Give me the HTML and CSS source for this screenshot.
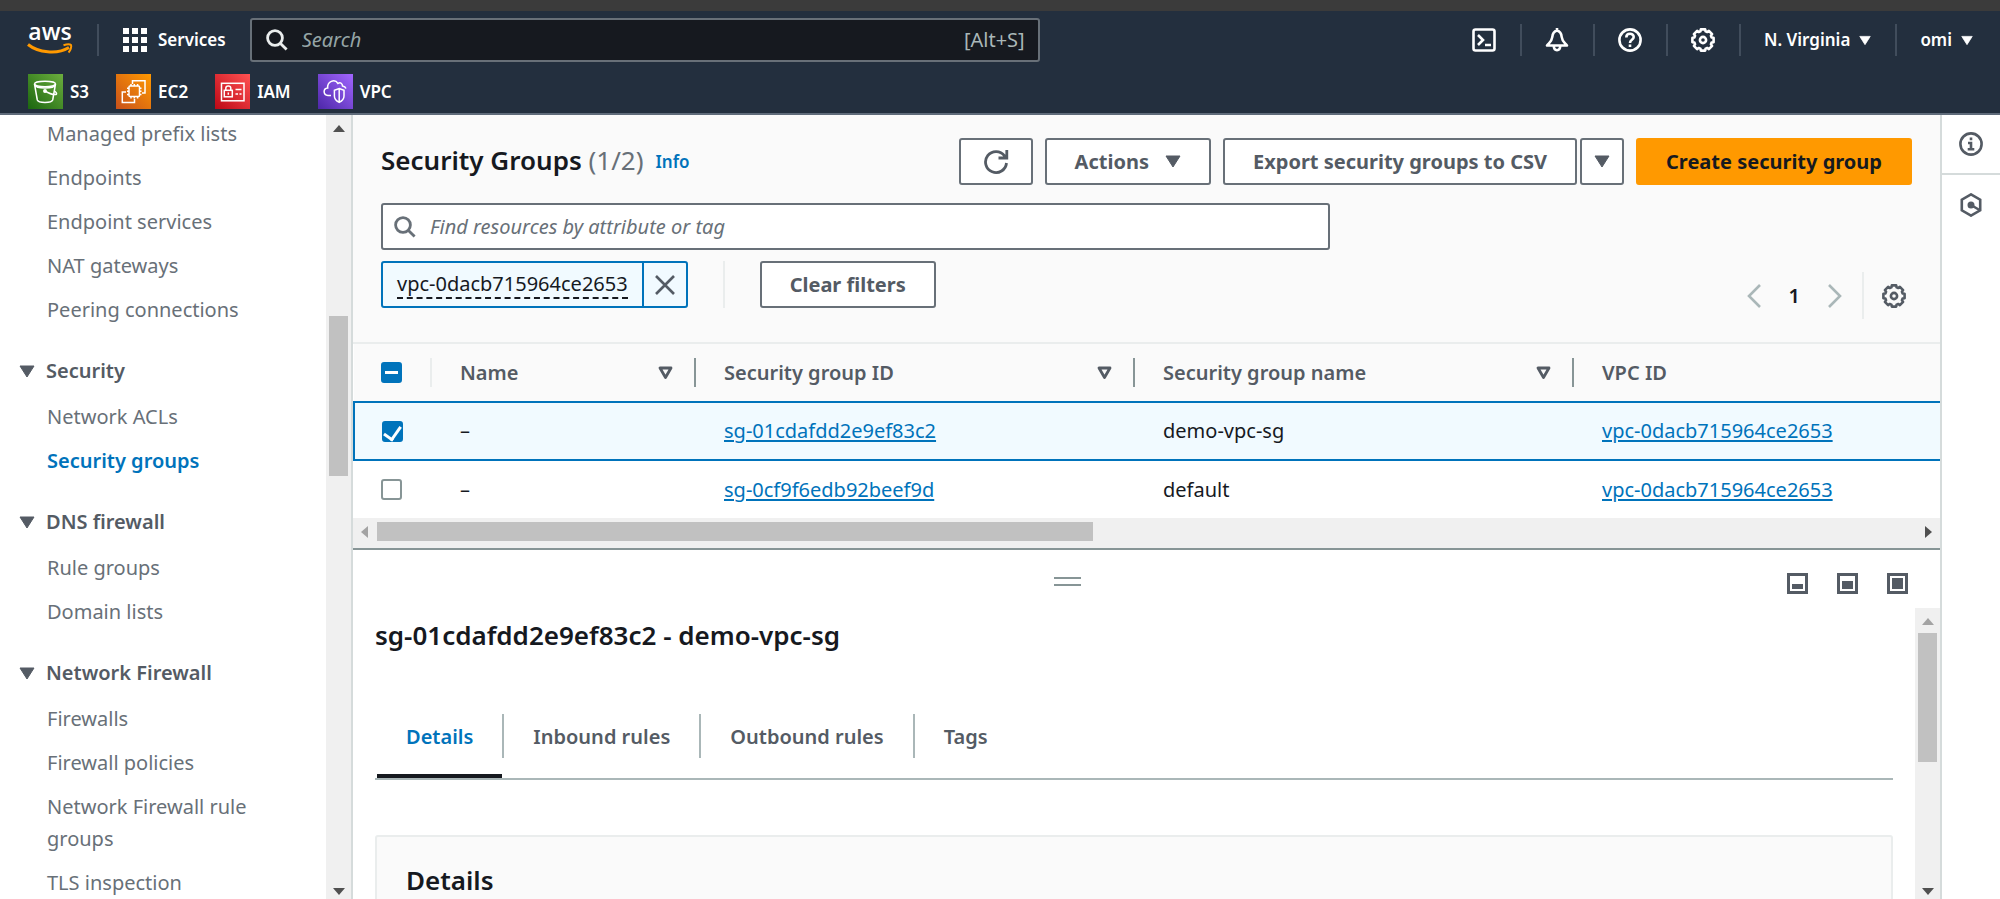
FILE: index.html
```html
<!DOCTYPE html>
<html lang="en">
<head>
<meta charset="utf-8">
<title>Security Groups | VPC Console</title>
<link rel="stylesheet" href="styles.css">
</head>
<body>
<svg class="defs" aria-hidden="true">
  <defs>
    <linearGradient id="g-s3" x1="0" y1="1" x2="1" y2="0"><stop offset="0" stop-color="#1b660f"/><stop offset="1" stop-color="#6cae3e"/></linearGradient>
    <linearGradient id="g-ec2" x1="0" y1="1" x2="1" y2="0"><stop offset="0" stop-color="#c8511b"/><stop offset="1" stop-color="#ff9900"/></linearGradient>
    <linearGradient id="g-iam" x1="0" y1="1" x2="1" y2="0"><stop offset="0" stop-color="#bd0816"/><stop offset="1" stop-color="#ff5252"/></linearGradient>
    <linearGradient id="g-vpc" x1="0" y1="1" x2="1" y2="0"><stop offset="0" stop-color="#4d27a8"/><stop offset="1" stop-color="#a166ff"/></linearGradient>
  </defs>
  <symbol id="gear" viewBox="0 0 24 24">
    <path d="M20.6 9.4 22.6 9.8V14.2L20.6 14.6 19.95 16.2 21.1 17.9 17.9 21.1 16.2 19.95 14.6 20.6 14.2 22.6H9.8L9.4 20.6 7.8 19.95 6.1 21.1 2.9 17.9 4.05 16.2 3.4 14.6 1.4 14.2V9.8L3.4 9.4 4.05 7.8 2.9 6.1 6.1 2.9 7.8 4.05 9.4 3.4 9.8 1.4H14.2L14.6 3.4 16.2 4.05 17.9 2.9 21.1 6.1 19.95 7.8Z" fill="none" stroke="currentColor" stroke-width="2.6" stroke-linejoin="round"/>
    <circle cx="12" cy="12" r="3.1" fill="none" stroke="currentColor" stroke-width="2.6"/>
  </symbol>
  <symbol id="lens" viewBox="0 0 22 22">
    <circle cx="9" cy="9" r="7.4" fill="none" stroke="currentColor" stroke-width="2.8"/>
    <path d="M14.2 14.2 20.6 20.6" stroke="currentColor" stroke-width="2.8"/>
  </symbol>
  <symbol id="caret" viewBox="0 0 16 13"><path d="M1 1H15L8 12Z" fill="currentColor" stroke="currentColor" stroke-linejoin="round"/></symbol>
  <symbol id="sort" viewBox="0 0 15 14"><path d="M2 2H13L7.500 11.500Z" fill="none" stroke="currentColor" stroke-width="2.8" stroke-linejoin="round"/></symbol>
  <symbol id="tri-up" viewBox="0 0 12 7"><path d="M0 7H12L6 0Z" fill="currentColor"/></symbol>
</svg>

<div class="chrome-edge"></div>
<header class="top">
  <div class="top-row">
    <a class="logo" href="#" aria-label="AWS home">
      <svg width="46" height="44" viewBox="0 0 46 44">
        <text x="23" y="22" text-anchor="middle" class="logo-text">aws</text>
        <path d="M1 26.500C11 34.500 30 37 42 29.500" fill="none" stroke="#f90" stroke-width="3"/>
        <path d="M36.500 27.200C40 26 43 26 44 27 44.800 28.500 43.500 32.500 41.500 34.500" fill="none" stroke="#f90" stroke-width="2"/>
      </svg>
    </a>
    <span class="bar"></span>
    <button class="services" type="button">
      <svg width="24" height="24" viewBox="0 0 24 24" fill="#fff"><path d="M0 0h6v6H0zM9 0h6v6H9zM18 0h6v6h-6zM0 9h6v6H0zM9 9h6v6H9zM18 9h6v6h-6zM0 18h6v6H0zM9 18h6v6H9zM18 18h6v6h-6z"/></svg>
      Services
    </button>
    <label class="top-search">
      <svg width="22" height="22" aria-hidden="true"><use href="#lens"/></svg>
      <input type="search" placeholder="Search" aria-label="Search">
      <span>[Alt+S]</span>
    </label>
    <nav class="tools" aria-label="Account">
      <button type="button" aria-label="CloudShell">
        <svg width="24" height="24" viewBox="0 0 24 24" fill="none" stroke="currentColor" stroke-width="2.6"><rect x="1.500" y="1.500" width="21" height="21" rx="2"/><path d="M6 7l5 5-5 5M13 17h6"/></svg>
      </button>
      <button type="button" aria-label="Notifications">
        <svg width="24" height="24" viewBox="0 0 24 24" fill="none" stroke="currentColor" stroke-width="2.600" stroke-linejoin="round"><path d="M12 2.500C8.500 3.500 7.500 6 7.300 9 7 13 4.500 14.500 2 17.500H22C19.500 14.500 17 13 16.700 9 16.500 6 15.500 3.500 12 2.500ZM12 3V0M8.800 18C8.800 23.500 15.200 23.500 15.200 18"/></svg>
      </button>
      <button type="button" aria-label="Help">
        <svg width="24" height="24" viewBox="0 0 24 24" fill="none" stroke="currentColor" stroke-width="2.600"><circle cx="12" cy="12" r="10.600"/><path d="M8.300 9.500C8.300 4.500 15.700 4.800 15.700 9 15.700 12 12 11.500 12 15M12 16.500V19"/></svg>
      </button>
      <button type="button" aria-label="Settings"><svg width="24" height="24"><use href="#gear"/></svg></button>
      <button type="button">N. Virginia <svg width="12" height="11"><use href="#caret"/></svg></button>
      <button type="button">omi <svg width="12" height="11"><use href="#caret"/></svg></button>
    </nav>
  </div>
  <nav class="favs" aria-label="Favorites">
    <a href="#"><svg width="35" height="35" viewBox="0 0 35 35" fill="none" stroke="#fff" stroke-width="1.500"><rect width="35" height="35" fill="url(#g-s3)" stroke="none"/><ellipse cx="17" cy="10" rx="10.500" ry="2.700"/><path d="M6.500 10 9.300 26C10.500 29.300 23.500 29.300 24.700 26L27.500 10M17 17C21 19.500 25 20.800 28 20.500 29.300 20 28 18 26.500 17M7 11C8 15 26 15 27 11"/><circle cx="17" cy="17" r="1.200" fill="#fff"/></svg>S3</a>
    <a href="#"><svg width="35" height="35" viewBox="0 0 35 35" fill="none" stroke="#fff" stroke-width="1.500"><rect width="35" height="35" fill="url(#g-ec2)" stroke="none"/><path d="M16.500 10V6.700H29V19H26M10 18H6.300V28.500H18.500V25"/><rect x="13" y="12" width="10.500" height="10.500" rx="1"/><path d="M15 12V10M18.300 12V10M21.600 12V10M15 24.500V22.500M18.300 24.500V22.500M21.600 24.500V22.500M13 14.200H11M13 17.300H11M13 20.400H11M25.500 14.200H23.500M25.500 17.300H23.500M25.500 20.400H23.500"/></svg>EC2</a>
    <a href="#"><svg width="35" height="35" viewBox="0 0 35 35" fill="none" stroke="#fff" stroke-width="1.500"><rect width="35" height="35" fill="url(#g-iam)" stroke="none"/><rect x="6.500" y="9.300" width="22.500" height="17.500"/><rect x="9.300" y="16.300" width="8" height="6.500"/><path d="M10.800 16V14.200C10.800 11.300 15.800 11.300 15.800 14.200V16M13.300 18.500V20.800M20.500 15.500H26.500M20.500 20H23M24.500 20H26.500"/></svg>IAM</a>
    <a href="#"><svg width="35" height="35" viewBox="0 0 35 35" fill="none" stroke="#fff" stroke-width="1.500"><rect width="35" height="35" fill="url(#g-vpc)" stroke="none"/><path d="M13 21.500H10C5 21 4.800 14.500 9.700 14 9 8 16.500 4 20 9.500 22.500 7.500 24.500 10 24.500 12 26 12.300 27.500 13.200 28 14.500M21.200 14.500 26 16.200V22C26 25 24 27 21.200 28.300 18.400 27 16.400 25 16.400 22V16.200ZM21.200 14.500V28"/></svg>VPC</a>
  </nav>
</header>

<div class="shell">
  <nav class="side" aria-label="VPC">
    <div class="side-list">
      <ul>
        <li><a href="#">Managed prefix lists</a></li>
        <li><a href="#">Endpoints</a></li>
        <li><a href="#">Endpoint services</a></li>
        <li><a href="#">NAT gateways</a></li>
        <li><a href="#">Peering connections</a></li>
      </ul>
      <h3><svg width="16" height="13"><use href="#caret"/></svg>Security</h3>
      <ul>
        <li><a href="#">Network ACLs</a></li>
        <li><a class="current" href="#" aria-current="page">Security groups</a></li>
      </ul>
      <h3><svg width="16" height="13"><use href="#caret"/></svg>DNS firewall</h3>
      <ul>
        <li><a href="#">Rule groups</a></li>
        <li><a href="#">Domain lists</a></li>
      </ul>
      <h3><svg width="16" height="13"><use href="#caret"/></svg>Network Firewall</h3>
      <ul>
        <li><a href="#">Firewalls</a></li>
        <li><a href="#">Firewall policies</a></li>
        <li><a href="#">Network Firewall rule groups</a></li>
        <li><a href="#">TLS inspection</a></li>
      </ul>
    </div>
    <div class="vbar" aria-hidden="true">
      <svg width="12" height="7"><use href="#tri-up"/></svg>
      <div class="track"><i class="before-side"></i><i class="thumb-side"></i></div>
      <svg class="flip" width="12" height="7"><use href="#tri-up"/></svg>
    </div>
  </nav>

  <main class="main">
    <section class="list">
      <div class="list-head">
        <div class="title-row">
          <h1>Security Groups <span>(1/2)</span></h1>
          <a class="info" href="#">Info</a>
          <div class="actions">
            <button class="btn refresh" type="button" aria-label="Refresh"><svg width="26" height="26" viewBox="0 0 26 26" fill="none" stroke="currentColor" stroke-width="2.800"><path d="M23.500 14A10.500 10.500 0 1 1 21.500 6.800L23 8.500M23.800 1V9H15.500"/></svg></button>
            <button class="btn" type="button">Actions <svg width="16" height="13"><use href="#caret"/></svg></button>
            <div class="split">
              <button class="btn" type="button">Export security groups to CSV</button>
              <button class="btn drop" type="button" aria-label="More export options"><svg width="16" height="13"><use href="#caret"/></svg></button>
            </div>
            <button class="btn primary" type="button">Create security group</button>
          </div>
        </div>
        <label class="find">
          <svg width="22" height="22" aria-hidden="true"><use href="#lens"/></svg>
          <input type="search" placeholder="Find resources by attribute or tag" aria-label="Find resources by attribute or tag">
        </label>
        <div class="filter-row">
          <div class="token"><span><b>vpc-0dacb715964ce2653</b></span><button type="button" aria-label="Remove filter"><svg width="20" height="20" viewBox="0 0 20 20" stroke="currentColor" stroke-width="2.600"><path d="M1 1 19 19M19 1 1 19"/></svg></button></div>
          <span class="rule"></span>
          <button class="btn" type="button">Clear filters</button>
          <div class="pager">
            <button type="button" aria-label="Previous page"><svg width="14" height="24" viewBox="0 0 14 24" fill="none" stroke="currentColor" stroke-width="2.600"><path d="M13 1 2 12 13 23"/></svg></button>
            <button class="page" type="button">1</button>
            <button type="button" aria-label="Next page"><svg width="14" height="24" viewBox="0 0 14 24" fill="none" stroke="currentColor" stroke-width="2.600"><path d="M1 1 12 12 1 23"/></svg></button>
            <span class="rule"></span>
            <button class="prefs" type="button" aria-label="Preferences"><svg width="24" height="24"><use href="#gear"/></svg></button>
          </div>
        </div>
      </div>
      <table>
        <colgroup><col class="c-check"><col class="c-name"><col class="c-wide"><col class="c-wide"><col></colgroup>
        <thead>
          <tr>
            <th><input class="some" type="checkbox" aria-label="Select all" aria-checked="mixed"></th>
            <th><div class="th faint">Name <svg width="15" height="14"><use href="#sort"/></svg></div></th>
            <th><div class="th">Security group ID <svg width="15" height="14"><use href="#sort"/></svg></div></th>
            <th><div class="th">Security group name <svg width="15" height="14"><use href="#sort"/></svg></div></th>
            <th><div class="th">VPC ID</div></th>
          </tr>
        </thead>
        <tbody>
          <tr class="picked">
            <td><input type="checkbox" checked aria-label="Select demo-vpc-sg"></td>
            <td>–</td>
            <td><a href="#">sg-01cdafdd2e9ef83c2</a></td>
            <td>demo-vpc-sg</td>
            <td><a href="#">vpc-0dacb715964ce2653</a></td>
          </tr>
          <tr>
            <td><input type="checkbox" aria-label="Select default"></td>
            <td>–</td>
            <td><a href="#">sg-0cf9f6edb92beef9d</a></td>
            <td>default</td>
            <td><a href="#">vpc-0dacb715964ce2653</a></td>
          </tr>
        </tbody>
      </table>
      <div class="hbar" aria-hidden="true">
        <svg class="dim" width="7" height="12" viewBox="0 0 7 12"><path d="M7 0V12L0 6Z" fill="currentColor"/></svg>
        <div class="track"><i></i></div>
        <svg width="7" height="12" viewBox="0 0 7 12"><path d="M0 0V12L7 6Z" fill="currentColor"/></svg>
      </div>
    </section>

    <section class="panel">
      <div class="panel-bar">
        <span class="grip"></span>
        <div class="sizes">
          <button type="button" aria-label="Small panel"><svg width="21" height="21" viewBox="0 0 21 21"><rect x="1.500" y="1.500" width="18" height="18" fill="none" stroke="currentColor" stroke-width="3"/><rect x="5" y="11" width="11" height="5" fill="currentColor"/></svg></button>
          <button type="button" aria-label="Medium panel"><svg width="21" height="21" viewBox="0 0 21 21"><rect x="1.500" y="1.500" width="18" height="18" fill="none" stroke="currentColor" stroke-width="3"/><rect x="5" y="8" width="11" height="8" fill="currentColor"/></svg></button>
          <button type="button" aria-label="Full panel"><svg width="21" height="21" viewBox="0 0 21 21"><rect x="1.500" y="1.500" width="18" height="18" fill="none" stroke="currentColor" stroke-width="3"/><rect x="5" y="5" width="11" height="11" fill="currentColor"/></svg></button>
        </div>
      </div>
      <div class="panel-body">
        <div class="panel-content">
          <h2>sg-01cdafdd2e9ef83c2 - demo-vpc-sg</h2>
          <div class="tabs" role="tablist">
            <button class="on" type="button" role="tab" aria-selected="true">Details</button>
            <button type="button" role="tab">Inbound rules</button>
            <button type="button" role="tab">Outbound rules</button>
            <button type="button" role="tab">Tags</button>
          </div>
          <div class="card"><h2>Details</h2></div>
        </div>
        <div class="vbar" aria-hidden="true">
          <svg class="dim" width="12" height="7"><use href="#tri-up"/></svg>
          <div class="track"><i class="thumb-panel"></i></div>
          <svg class="flip" width="12" height="7"><use href="#tri-up"/></svg>
        </div>
      </div>
    </section>
  </main>

  <aside class="rail">
    <button type="button" aria-label="Info"><svg width="24" height="24" viewBox="0 0 24 24" fill="none" stroke="currentColor" stroke-width="2.600"><circle cx="12" cy="12" r="10.600"/><path d="M12 5.500V8.200M9 11H12V17.200M8.700 17.200H15.300"/></svg></button>
    <button type="button" aria-label="Diagnostics"><svg width="24" height="24" viewBox="0 0 24 24" fill="none" stroke="currentColor" stroke-width="2.600"><path d="M12 1.400 21.200 6.700V17.300L12 22.600 2.800 17.300V6.700Z"/><circle cx="12" cy="12" r="2.200" fill="currentColor"/><path d="M12 12 20.500 17"/></svg></button>
  </aside>
</div>
</body>
</html>
```
FILE: styles.css
```css
* { box-sizing: border-box; }
body {
  margin: 0;
  height: 100vh;
  display: flex;
  flex-direction: column;
  overflow: hidden;
  background: #fff;
  color: #16191f;
  font: 20px/32px "Noto Sans", "Open Sans", sans-serif;
}
button, input { font: inherit; color: inherit; }
button { border: 0; background: none; padding: 0; display: flex; align-items: center; white-space: nowrap; }
h1, h2, h3, ul { margin: 0; padding: 0; list-style: none; }
a { text-decoration: none; color: inherit; }
svg { display: block; flex: none; }
.defs { position: absolute; width: 0; height: 0; }

.chrome-edge { height: 11px; background: #3b3b3b; flex: none; }
.top { flex: none; background: #232f3e; border-bottom: 2px solid #5f6b7a; color: #fff; font-size: 17px; font-weight: 600; }
.top-row { display: flex; align-items: center; padding: 7px 27px 0; }
.logo svg { overflow: visible; }
.logo-text { font: 600 23px/24px "Open Sans", sans-serif; fill: #fff; }
.bar { width: 2px; height: 32px; background: #414d5c; margin-left: 24px; }
.services { gap: 11px; margin-left: 24px; }
.top-search {
  display: flex; align-items: center; flex: 0 0 790px; height: 44px; margin-left: 24px; padding: 0 13px 0 14px;
  background: #16191f; border: 2px solid #687078; border-radius: 3px; color: #eaeded;
}
.top-search input { flex: 1; min-width: 0; margin-left: 14px; border: 0; padding: 0; background: none; outline: none; font-size: 20px; font-weight: 400; }
.top-search input::placeholder { color: #95a5a6; font-style: italic; opacity: 1; }
.top-search span { color: #aab7b8; font-size: 20px; font-weight: 400; }
.tools { display: flex; margin-left: auto; }
.tools button { height: 32px; gap: 9px; padding: 0 24px 0 23px; border-left: 2px solid #414d5c; }
.tools button:first-child { border: 0; }
.tools button:last-child { padding-right: 0; }
.favs { display: flex; gap: 27px; padding: 12px 28px 4px; }
.favs a { display: flex; align-items: center; gap: 7px; }

.shell { flex: 1; min-height: 0; display: flex; color: #545b64; }
.side { flex: 0 0 353px; display: flex; border-right: 2px solid #d5dbdb; }
.side-list { flex: 1; min-width: 0; overflow: hidden; padding: 3px 60px 0 19px; }
.side li { padding-left: 28px; margin-bottom: 12px; color: #687078; }
.side h3 { display: flex; align-items: center; gap: 11px; margin: 29px 0 14px; font-size: 20px; font-weight: 600; }
.side .current { color: #0073bb; font-weight: 600; }
.vbar { flex: 0 0 25px; display: flex; flex-direction: column; align-items: center; padding: 10px 0 4px; background: #f0f0f0; color: #505050; }
.vbar .track { flex: 1; width: 19px; margin: 8px 0; display: flex; flex-direction: column; }
.track i { display: block; background: #c1c1c1; }
.track .before-side { height: 176px; background: none; }
.thumb-side { height: 160px; }
.thumb-panel { height: 129px; }
.flip { transform: rotate(180deg); }
.dim { color: #a3a3a3; }

.main { flex: 1; min-width: 0; display: flex; flex-direction: column; }
.list-head { padding: 23px 28px 34px; background: #fafafa; border-bottom: 2px solid #eaeded; }
.title-row { display: flex; align-items: flex-start; }
h1, h2 { color: #16191f; font-size: 26px; font-weight: 600; }
.title-row h1 { line-height: 44px; }
h1 span { color: #687078; font-weight: 400; }
.info { margin: 8px 0 0 12px; color: #0073bb; font-size: 17px; font-weight: 600; }
.actions { display: flex; gap: 12px; margin-left: auto; }
.split { display: flex; gap: 3px; }
.btn { height: 47px; padding: 0 28px; gap: 16px; background: #fff; border: 2px solid #687078; border-radius: 3px; color: #545b64; font-weight: 700; }
.actions .btn.refresh { padding: 0 22px; }
.actions .btn.drop { padding: 0 12px; }
.actions .btn.primary { background: #f90; border-color: #f90; color: #16191f; }
.find { display: flex; align-items: center; width: 62%; height: 47px; margin: 18px 0 11px; padding: 0 11px; background: #fff; border: 2px solid #687078; border-radius: 3px; color: #687078; }
.find input { flex: 1; border: 0; padding: 0; margin-left: 14px; outline: none; background: none; }
.find input::placeholder { color: #687078; font-style: italic; opacity: 1; }
.filter-row { display: flex; align-items: flex-start; height: 47px; }
.token { display: flex; align-items: stretch; height: 47px; background: #f1faff; border: 2px solid #0073bb; border-radius: 3px; color: #16191f; }
.token span { display: flex; align-items: center; padding: 0 14px; }
.token b { font-weight: 400; line-height: 26px; border-bottom: 2px dashed #16191f; }
.token button { padding: 0 11px; border-left: 2px solid #0073bb; color: #545b64; }
.rule { width: 2px; height: 47px; background: #eaeded; }
.token + .rule { margin: 0 35px; }
.pager { display: flex; align-items: center; margin: 11px 6px 0 auto; height: 47px; color: #aab7b8; }
.pager .page { margin: 0 28px; color: #16191f; font-weight: 600; }
.pager .rule { margin: 0 18px 0 20px; }
.pager .prefs { color: #545b64; }

table { width: 100%; table-layout: fixed; border-collapse: collapse; background: #fff; color: #16191f; }
.c-check { width: 76px; }
.c-name { width: 264px; }
.c-wide { width: 439px; }
th, td { height: 58px; padding: 0 0 0 30px; text-align: left; }
th { padding: 0; background: #fafafa; color: #545b64; font-weight: 600; }
th:first-child, td:first-child { padding-left: 27px; }
.th { display: flex; align-items: center; justify-content: space-between; height: 29px; padding: 0 21px 0 28px; border-left: 2px solid #879596; }
.faint { border-color: #eaeded; }
td a { color: #0073bb; text-decoration: underline; text-underline-offset: 2px; }
.picked td { background: #f1faff; border: solid #0073bb; border-width: 2px 0; }
.picked td:first-child { border-left-width: 2px; }
input[type="checkbox"] { appearance: none; display: grid; place-items: center; width: 21px; height: 21px; margin: 0; background: #fff; border: 2px solid #879596; border-radius: 3px; }
input[type="checkbox"]:checked, input[type="checkbox"].some { background: #0073bb; border-color: #0073bb; }
input.some::before { content: ""; width: 13px; height: 3px; background: #fff; }
input:checked::before { content: ""; width: 8px; height: 14px; margin-bottom: 4px; border: solid #fff; border-width: 0 3px 3px 0; transform: rotate(35deg); }

.hbar { display: flex; align-items: center; height: 30px; padding: 0 8px 3px 8px; background: #f0f0f0; color: #505050; }
.hbar .track { flex: 1; margin: 0 9px; }
.hbar i { width: 46.5%; height: 19px; }
.panel { flex: 1; min-height: 0; display: flex; flex-direction: column; border-top: 2px solid #879596; background: #fff; }
.panel-bar { display: grid; grid-template-columns: 45fr auto 55fr; align-items: center; height: 58px; padding: 12px 32px 0 24px; }
.grip { grid-column: 2; width: 27px; height: 9px; margin-bottom: 8px; border: solid #879596; border-width: 2px 0; }
.sizes { display: flex; gap: 29px; justify-self: end; padding-bottom: 3px; color: #545b64; }
.panel-body { flex: 1; min-height: 0; display: flex; }
.panel-content { flex: 1; min-width: 0; overflow: hidden; padding: 11px 22px 0 22px; }
.tabs { display: flex; align-items: flex-start; margin-top: 63px; padding-left: 2px; border-bottom: 2px solid #aab7b8; }
.tabs button { height: 64px; padding: 0 29px 15px; border-bottom: 4px solid transparent; color: #545b64; font-weight: 600; position: relative; }
.tabs button + button { padding-left: 31px; }
.tabs button + button::before { content: ""; position: absolute; left: 0; top: 0; height: 44px; border-left: 2px solid #aab7b8; }
.tabs button.on { color: #0073bb; border-color: #16191f; }
.card { margin-top: 55px; height: 200px; padding: 27px 29px; background: #fafafa; border: 2px solid #eaeded; border-radius: 3px 3px 0 0; }

.rail { flex: 0 0 60px; border-left: 2px solid #d5dbdb; }
.rail button { width: 100%; height: 60px; justify-content: center; }
.rail button:first-child { border-bottom: 2px solid #d5dbdb; }
```
